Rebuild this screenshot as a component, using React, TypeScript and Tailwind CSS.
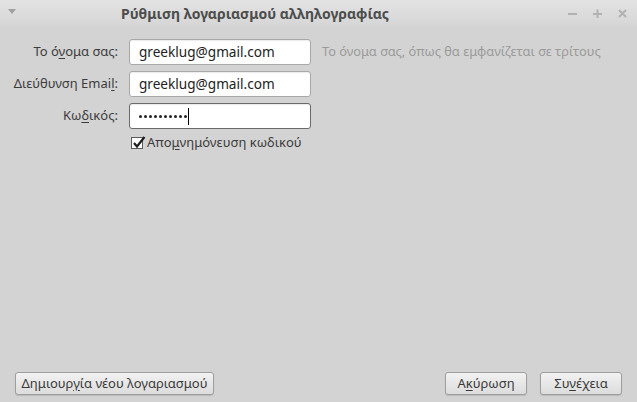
import React from "react";

function Field({ label, value, password, focused }: { label: React.ReactNode; value: string; password?: boolean; focused?: boolean }) {
  return (
    <div className="flex items-center h-[26px]">
      <div className="w-[120px] pr-[2px] text-right text-[13px] text-[#3c3c3c]">{label}</div>
      <div
        className={
          "ml-[9px] flex h-[26px] w-[182px] items-center rounded-[3px] border bg-white pl-[9px] text-[13.6px] text-[#222] shadow-[inset_0_1px_1px_rgba(0,0,0,0.08)] " +
          (focused ? "border-[#6a6a6a]" : "border-[#a8a8a8]")
        }
      >
        {password ? (
          <span className="flex items-center">
            <span className="flex items-center gap-[2px]">
              {Array.from({ length: 10 }).map((_, i) => (
                <span key={i} className="h-[3px] w-[3px] rounded-full bg-[#222]" />
              ))}
            </span>
            <span className="ml-[1px] h-[17px] w-px bg-black" />
          </span>
        ) : (
          value
        )}
      </div>
    </div>
  );
}

function Btn({ children, className }: { children: React.ReactNode; className?: string }) {
  return (
    <div
      className={
        "flex h-[23px] items-center justify-center rounded-[3px] border border-[#9e9e9e] bg-gradient-to-b from-[#f2f2f2] to-[#dcdcdc] text-[13px] text-[#3a3a3a] shadow-[0_1px_1px_rgba(0,0,0,0.12)] " +
        (className ?? "")
      }
    >
      {children}
    </div>
  );
}

export default function App() {
  return (
    <div className="flex h-[402px] w-[637px] flex-col bg-[#d3d3d3]" style={{ fontFamily: '"Noto Sans", "Open Sans", sans-serif' }}>
      <div className="flex h-[26px] items-center bg-gradient-to-b from-[#e3e3e3] to-[#d6d6d6]">
        <svg width="8" height="5" viewBox="0 0 8 5" className="ml-[8px] mt-[-4px]">
          <path d="M0 0 L8 0 L4 5 Z" fill="#a0a0a0" />
        </svg>
        <div className="ml-[105px] text-[14px] font-bold text-[#4d4d4d]">Ρύθμιση λογαριασμού αλληλογραφίας</div>
        <div className="ml-auto mr-[10px] flex items-center gap-[16px] text-[#b0b0b0]">
          <svg width="9" height="9" viewBox="0 0 9 9">
            <path d="M0 5 H9" stroke="#b2b2b2" strokeWidth="2" />
          </svg>
          <svg width="9" height="9" viewBox="0 0 9 9">
            <path d="M0 5 H9 M4.5 0.5 V9" stroke="#b2b2b2" strokeWidth="2" />
          </svg>
          <svg width="9" height="9" viewBox="0 0 9 9">
            <path d="M1 1 L8 8 M8 1 L1 8" stroke="#b2b2b2" strokeWidth="2" />
          </svg>
        </div>
      </div>

      <div className="flex flex-col gap-[6px] pt-[13px]">
        <div className="flex items-center">
          <Field
            label={
              <>
                Το ό<span className="underline underline-offset-2">ν</span>ομα σας:
              </>
            }
            value="greeklug@gmail.com"
          />
          <div className="ml-[11px] text-[12.8px] text-[#9a9a9a]">Το όνομα σας, όπως θα εμφανίζεται σε τρίτους</div>
        </div>
        <Field
          label={
            <>
              Διεύθυνση Emai<span className="underline underline-offset-2">l</span>:
            </>
          }
          value="greeklug@gmail.com"
        />
        <Field
          label={
            <>
              Κω<span className="underline underline-offset-2">δ</span>ικός:
            </>
          }
          value=""
          password
          focused
        />
        <div className="ml-[131px] mt-[-2px] flex items-center text-[13px] text-[#3c3c3c]">
          <div className="relative h-[12px] w-[12px] border border-[#5a5a5a] bg-white">
            <svg width="14" height="13" viewBox="0 0 14 13" className="absolute left-[0px] top-[-2px]">
              <path d="M2 7 L5 10.5 L12.5 1" stroke="#1e1e1e" strokeWidth="2.2" fill="none" />
            </svg>
          </div>
          <span className="ml-[4px]">
            Απο<span className="underline underline-offset-2">μ</span>νημόνευση κωδικού
          </span>
        </div>
      </div>

      <div className="mt-auto flex items-center px-[15px] pb-[7px]">
        <Btn className="w-[199px]">
          <span>
            Δημιουρ<span className="underline underline-offset-2">γ</span>ία νέου λογαριασμού
          </span>
        </Btn>
        <Btn className="ml-auto w-[82px]">
          <span>
            Α<span className="underline underline-offset-2">κ</span>ύρωση
          </span>
        </Btn>
        <Btn className="ml-[13px] w-[82px]">
          <span>
            Συ<span className="underline underline-offset-2">ν</span>έχεια
          </span>
        </Btn>
      </div>
    </div>
  );
}
